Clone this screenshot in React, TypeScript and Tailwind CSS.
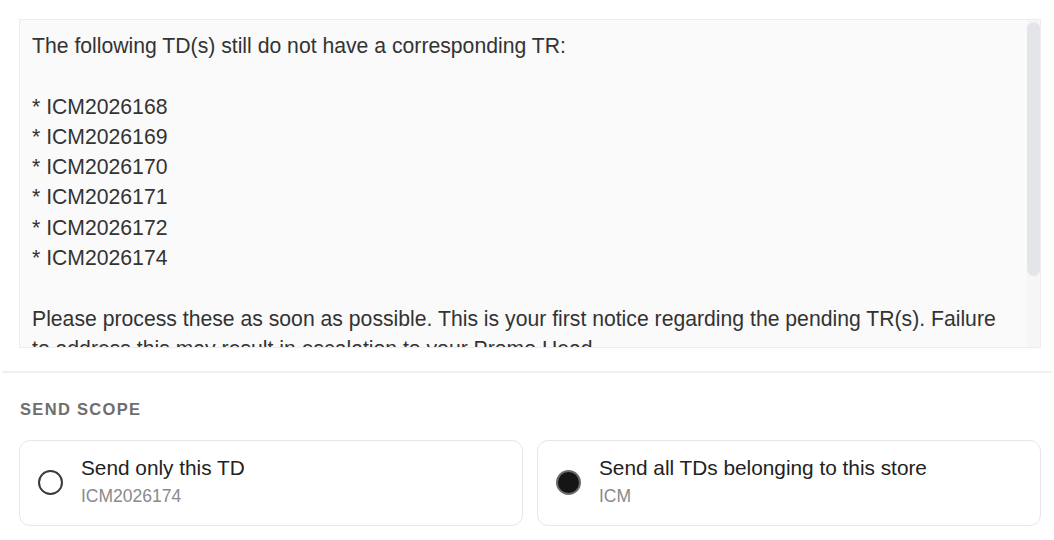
import { useState } from "react";

const pending = [
  "ICM2026168",
  "ICM2026169",
  "ICM2026170",
  "ICM2026171",
  "ICM2026172",
  "ICM2026174",
];

const message =
  "The following TD(s) still do not have a corresponding TR:\n\n" +
  pending.map((id) => `* ${id}`).join("\n") +
  "\n\nPlease process these as soon as possible. This is your first notice regarding the pending TR(s). Failure to address this may result in escalation to your Promo Head.";

function ScopeOption({
  title,
  sub,
  checked,
  onSelect,
}: {
  title: string;
  sub: string;
  checked: boolean;
  onSelect: () => void;
}) {
  return (
    <button
      type="button"
      onClick={onSelect}
      className="flex flex-1 items-center gap-[18px] rounded-[11px] border border-[#e6e7ea] bg-white px-[18px] h-[86px] text-left"
    >
      {checked ? (
        <span className="h-[25px] w-[25px] shrink-0 rounded-full border-[2px] border-[#6b6b6b] bg-[#151515]" />
      ) : (
        <span className="h-[25px] w-[25px] shrink-0 rounded-full border-[2px] border-[#3a3a3a] bg-white" />
      )}
      <span className="-mt-[2px] flex flex-col">
        <span className="text-[20.8px] leading-[28px] text-[#222]">{title}</span>
        <span className="text-[17.5px] leading-[28px] text-[#8a8a8a]">{sub}</span>
      </span>
    </button>
  );
}

export default function App() {
  const [scope, setScope] = useState<"one" | "all">("all");

  return (
    <div
      className="bg-white pt-[19px] pb-[14px]"
      style={{ fontFamily: '"Liberation Sans", Arial, sans-serif' }}
    >
      {/* Message preview */}
      <div className="ml-[19px] mr-[13px] flex h-[329px] overflow-hidden border border-[#ececec] bg-[#fafafa]">
        <div className="flex-1 overflow-hidden pl-[12px] pt-[11px] pr-[22px] whitespace-pre-wrap text-[21.2px] leading-[30.3px] text-[#333]">
          {message}
        </div>
        <div className="flex w-[13px] shrink-0 flex-col bg-[#f6f6f7] py-[2px]">
          <div className="h-[254px] rounded-full bg-[#e4e5e8]" />
        </div>
      </div>

      <div className="mx-[2px] mt-[23px] h-[2px] bg-[#f0f0f0]" />

      {/* Send scope */}
      <div className="ml-[20px] mt-[24px] text-[16.5px] font-bold tracking-[0.08em] text-[#6e6e6e]">
        SEND SCOPE
      </div>
      <div className="ml-[19px] mr-[13px] mt-[18px] flex gap-[14px]">
        <ScopeOption
          title="Send only this TD"
          sub="ICM2026174"
          checked={scope === "one"}
          onSelect={() => setScope("one")}
        />
        <ScopeOption
          title="Send all TDs belonging to this store"
          sub="ICM"
          checked={scope === "all"}
          onSelect={() => setScope("all")}
        />
      </div>
    </div>
  );
}
